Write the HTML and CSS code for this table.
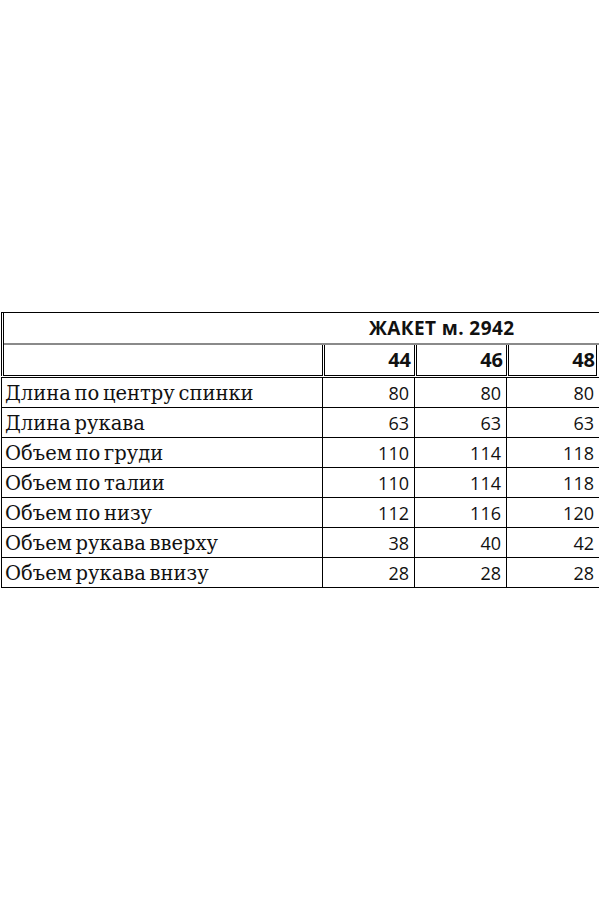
FILE: index.html
```html
<!DOCTYPE html>
<html lang="ru">
<head>
<meta charset="utf-8">
<title>ЖАКЕТ м. 2942</title>
<link rel="stylesheet" href="styles.css">
</head>
<body>
<div class="sheet">
  <div class="head">
    <div class="head-inner">
      <div class="title-row"><span class="title">ЖАКЕТ м. 2942</span></div>
      <div class="size-row">
        <div class="hcell hcell-label"></div>
        <div class="hcell">44</div>
        <div class="hcell">46</div>
        <div class="hcell hcell-last">48</div>
      </div>
    </div>
  </div>
  <div class="data">
    <div class="row"><div class="label">Длина по центру спинки</div><div class="num">80</div><div class="num">80</div><div class="num last">80</div></div>
    <div class="row"><div class="label">Длина рукава</div><div class="num">63</div><div class="num">63</div><div class="num last">63</div></div>
    <div class="row"><div class="label">Объем по груди</div><div class="num">110</div><div class="num">114</div><div class="num last">118</div></div>
    <div class="row"><div class="label">Объем по талии</div><div class="num">110</div><div class="num">114</div><div class="num last">118</div></div>
    <div class="row"><div class="label">Объем по низу</div><div class="num">112</div><div class="num">116</div><div class="num last">120</div></div>
    <div class="row"><div class="label">Объем рукава вверху</div><div class="num">38</div><div class="num">40</div><div class="num last">42</div></div>
    <div class="row"><div class="label">Объем рукава внизу</div><div class="num">28</div><div class="num">28</div><div class="num last">28</div></div>
  </div>
</div>
</body>
</html>
```
FILE: styles.css
```css
* { box-sizing: border-box; }
html, body { margin: 0; padding: 0; background: #fff; }
body { width: 599px; height: 899px; overflow: hidden; color: #111; }

.sheet { margin-top: 312px; margin-left: 1px; width: 600px; }

.head {
  border-top: 1px solid #000;
  border-left: 1px solid #000;
  padding-left: 1px;
}
.head-inner { border-left: 1px solid #000; }

.title-row {
  height: 32px;
  border-bottom: 2px solid #8a8a8a;
  padding-left: 365px;
  font-family: "Open Sans", "Liberation Sans", sans-serif;
  font-weight: 700;
  font-size: 19px;
  letter-spacing: 0.4px;
  line-height: 30px;
}

.size-row {
  display: grid;
  grid-template-columns: 319px 91px 91px 89px;
  column-gap: 1px;
  height: 31px;
}
.hcell {
  border-right: 1px solid #000;
  border-left: 1px solid #000;
  border-bottom: 1px solid #000;
  text-align: right;
  padding-right: 3px;
  font-family: "Open Sans", "Liberation Sans", sans-serif;
  font-weight: 700;
  font-size: 20px;
  line-height: 30px;
}
.hcell-label { border-left: none; }
.hcell-last { padding-right: 1px; }

.data { margin-top: 1px; margin-left: 0; border-top: 1px solid #000; }
.row {
  display: grid;
  grid-template-columns: 322px 92px 92px 92px;
  height: 30px;
  border-bottom: 1px solid #000;
}
.label {
  border-left: 1px solid #000;
  border-right: 1px solid #000;
  padding-left: 3px;
  padding-top: 3px;
  font-family: "DejaVu Serif", "Liberation Serif", serif;
  font-size: 19.5px;
  line-height: 26px;
  word-spacing: -2.5px;
  white-space: nowrap;
}
.num {
  border-right: 1px solid #000;
  text-align: right;
  padding-right: 5px;
  padding-top: 2px;
  font-family: "Open Sans", "Liberation Sans", sans-serif;
  font-size: 18px;
  line-height: 27px;
}
.num.last { border-right: none; }
```
